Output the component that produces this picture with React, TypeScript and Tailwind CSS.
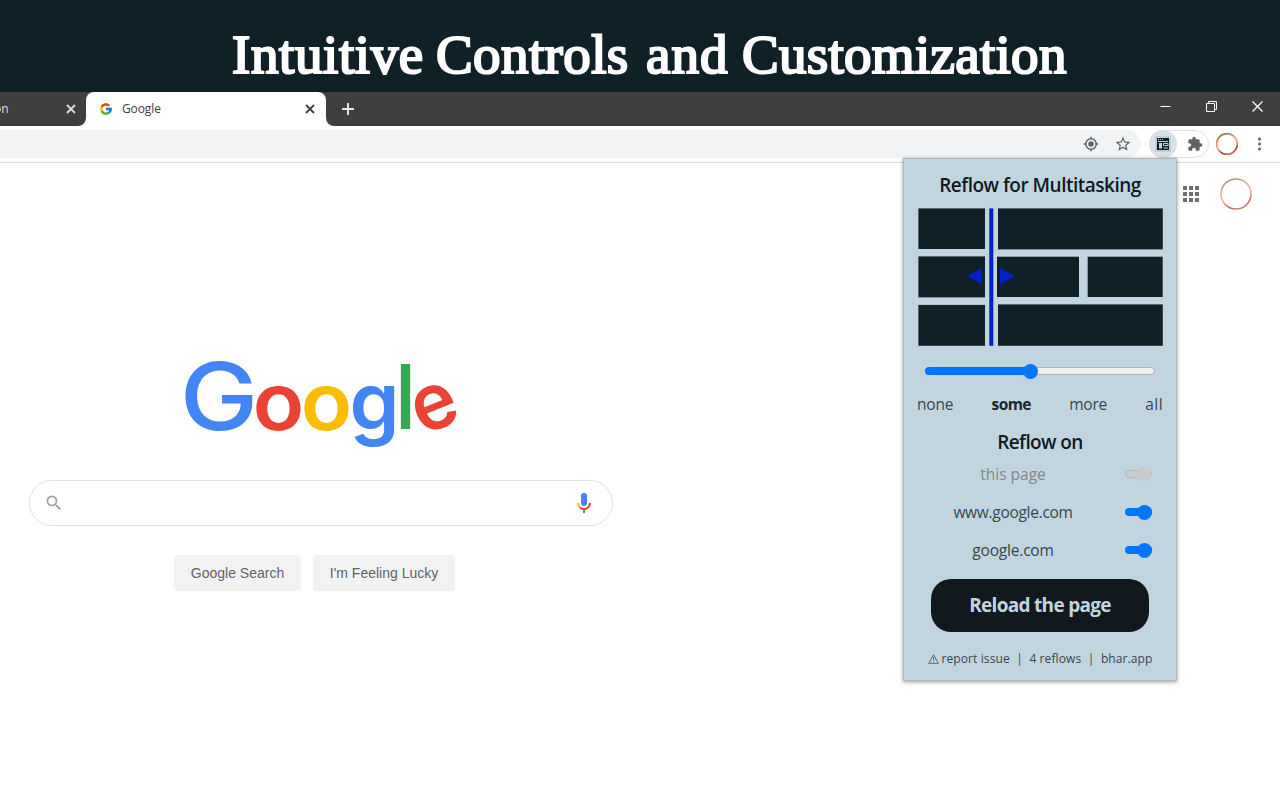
import React from "react";
import { FcGoogle } from "react-icons/fc";
import { MdSearch, MdStarBorder, MdExtension } from "react-icons/md";

const CloseIcon = ({ className }: { className: string }) => (
  <svg viewBox="0 0 10 10" className={className} fill="none" stroke="currentColor" strokeWidth="1.8">
    <path d="M1 1l8 8M9 1L1 9" />
  </svg>
);

const Ring = ({ id, className, stroke }: { id: string; className: string; stroke: number }) => (
  <svg viewBox="0 0 32 32" className={className} fill="none">
    <defs>
      <linearGradient id={id} x1="0.2" y1="0" x2="0.6" y2="1">
        <stop offset="0" stopColor="#8d6a4d" />
        <stop offset="0.15" stopColor="#a58a62" />
        <stop offset="0.35" stopColor="#e79a7c" />
        <stop offset="0.6" stopColor="#eda994" />
        <stop offset="0.85" stopColor="#b5402b" />
        <stop offset="1" stopColor="#b96d5b" />
      </linearGradient>
    </defs>
    <circle cx="16" cy="16" r="15" stroke={`url(#${id})`} strokeWidth={stroke} />
  </svg>
);

const Banner = () => (
  <header className="flex h-[92px] shrink-0 bg-[#102027] pl-[232px] pt-[17px]">
    <h1 className="flex gap-[17px] whitespace-nowrap font-['Liberation_Serif',serif] text-[55px] font-normal leading-[76px] text-white [-webkit-text-stroke:2.2px_white]">
      <span className="w-[187px] tracking-[0.6px]">Intuitive</span>
      <span className="w-[193px] tracking-[0.4px]">Controls</span>
      <span className="w-[79px] tracking-[1px]">and</span>
      <span className="tracking-[0.3px]">Customization</span>
    </h1>
  </header>
);

const TabStrip = () => (
  <div className="flex h-[34px] shrink-0 bg-white font-['Open_Sans',sans-serif] text-[12px]">
    <div className="flex w-[86px] items-center justify-between rounded-br-lg bg-[#3f3f3f] pr-[10px] text-[#dedede]">
      <span className="-ml-[6px]">on</span>
      <CloseIcon className="size-[10px]" />
    </div>
    <div className="w-[240px] bg-[#3f3f3f]">
      <div className="flex h-full items-center rounded-t-lg bg-white pl-[13px] pr-[11px] text-[#3c4043]">
        <FcGoogle className="size-[14px]" />
        <span className="ml-[9px] flex-1 tracking-[-0.1px]">Google</span>
        <CloseIcon className="size-[10px]" />
      </div>
    </div>
    <div className="flex flex-1 items-center rounded-bl-lg bg-[#3f3f3f] pl-[16px] text-white">
      <svg viewBox="0 0 12 12" className="size-[12px]" stroke="#e8e8e8" strokeWidth="1.9">
        <path d="M6 0v12M0 6h12" />
      </svg>
      <div className="ml-auto flex items-center gap-[35px] pb-[5px] pr-[17px]">
        <svg viewBox="0 0 11 11" className="size-[11px]" stroke="white" fill="none">
          <path d="M0.5 5.5h10" />
        </svg>
        <svg viewBox="0 0 11 11" className="size-[11px]" stroke="white" fill="none">
          <path d="M.5 2.5h8v8h-8zM2.5 2.5v-2h8v8h-2" />
        </svg>
        <svg viewBox="0 0 11 11" className="size-[11px]" stroke="white" strokeWidth="1.2" fill="none">
          <path d="M.5.5l10 10M10.5.5l-10 10" />
        </svg>
      </div>
    </div>
  </div>
);

const Toolbar = () => (
  <div className="flex h-[37px] shrink-0 items-start border-b border-[#dadcdd] bg-white pt-[4px]">
    <div className="flex h-[28px] w-[1141px] items-center justify-end gap-[15px] rounded-r-full bg-[#f1f3f4] pr-[9px] text-[#5f6368]">
      <svg viewBox="0 0 16 16" className="size-[16px]" fill="none" stroke="currentColor" strokeWidth="1.5">
        <circle cx="8" cy="8" r="5.2" />
        <circle cx="8" cy="8" r="2.7" fill="currentColor" stroke="none" />
        <path d="M8 .8v2M8 13.2v2M.8 8h2M13.2 8h2" />
      </svg>
      <MdStarBorder className="size-[18px]" />
    </div>
    <div className="ml-[8px] flex h-[28px] w-[60px] items-center rounded-full border border-[#dfe1e4]">
      <div className="-ml-px flex size-[28px] shrink-0 items-center justify-center rounded-full bg-[#dedfe0]">
        <svg viewBox="0 0 16 16" className="size-[16px]">
          <rect width="16" height="16" rx="1.5" fill="#b9d0db" />
          <rect x="2" y="2" width="12" height="12" fill="#0d1b22" />
          <path d="M3 3.5h1M5 3.500h1M7 3.500h1" stroke="#c1d5e0" />
          <path d="M3 5.500h10" stroke="#c1d5e0" />
          <path d="M4 7h3v5.500H4z" fill="#c1d5e0" />
          <path d="M8.500 7.500H13V9.500H8.500zM8.500 12H13" fill="none" stroke="#c1d5e0" />
        </svg>
      </div>
      <MdExtension className="ml-[10px] size-[16px] shrink-0 text-[#5f6368]" />
    </div>
    <Ring id="small" className="ml-[7px] mt-[3px] size-[22px]" stroke={2.6} />
    <svg viewBox="0 0 4 14" className="ml-[19px] mt-[7px] h-[14px] w-[4px]" fill="#5f6368">
      <circle cx="2.500" cy="2" r="1.5" />
      <circle cx="2.500" cy="7" r="1.5" />
      <circle cx="2.500" cy="12" r="1.5" />
    </svg>
  </div>
);

const Wordmark = () => (
  <svg viewBox="0 0 280 100" className="h-[100px] w-[280px] overflow-visible font-['Inter',sans-serif]" textAnchor="middle" role="img" aria-label="Google">
    <text fill="#4285f4" fontSize="93" fontWeight="500" transform="translate(39 74.500) scale(1.13 1)">G</text>
    <text fill="#ea4335" fontSize="79" fontWeight="600" transform="translate(98.500 74.500) scale(1.07 1)">o</text>
    <text fill="#fbbc05" fontSize="79" fontWeight="600" transform="translate(146.500 74.500) scale(1.07 1)">o</text>
    <text fill="#4285f4" fontSize="80" fontWeight="600" transform="translate(194.500 75)">g</text>
    <text fill="#34a853" fontSize="89" fontWeight="600" transform="translate(225.500 74) scale(.82 1)">l</text>
    <text fill="#ea4335" fontSize="79" fontWeight="600" transform="translate(254.500 52) rotate(-22) scale(.96 1)" y="22">e</text>
  </svg>
);

const SearchPage = () => (
  <main className="flex flex-1 bg-white">
    <div className="flex w-[642px] flex-col pl-[29px]">
      <div className="ml-[151px] mt-[192px] h-[100px]">
        <Wordmark />
      </div>
      <div className="mt-[25px] flex h-[46px] w-[584px] items-center justify-between rounded-full border border-[#dfe1e5] pl-[14px] pr-[20px]">
        <MdSearch className="size-[20px] text-[#9aa0a6]" />
        <svg viewBox="0 0 16 24" className="h-[24px] w-[16px]" fill="none" strokeWidth="2">
          <rect x="5" y="2" width="6" height="13" rx="3" fill="#4285f4" />
          <path d="M2 12a6 6 0 0 0 2 4.500" stroke="#fbbc05" />
          <path d="M4 16.500a6 6 0 0 0 10-4.500" stroke="#ea4335" />
          <path d="M8 18.500v3.500" stroke="#34a853" />
        </svg>
      </div>
      <div className="ml-[145px] mt-[29px] flex gap-[12px] font-['Liberation_Sans',Arial,sans-serif] text-[14px] text-[#5f6368]">
        <button className="h-[36px] w-[127px] rounded bg-[#f2f2f2]">Google Search</button>
        <button className="h-[36px] w-[142px] rounded bg-[#f2f2f2]">I'm Feeling Lucky</button>
      </div>
    </div>
    <div className="ml-auto flex items-center gap-[21px] self-start pr-[28px] pt-[15px]">
      <svg viewBox="0 0 16 16" className="size-[16px]" fill="#6f6f6f">
        <path d="M0 0h4v4H0zM6 0h4v4H6zM12 0h4v4h-4zM0 6h4v4H0zM6 6h4v4H6zM12 6h4v4h-4zM0 12h4v4H0zM6 12h4v4H6zM12 12h4v4h-4z" />
      </svg>
      <Ring id="large" className="size-[32px] opacity-80" stroke={1.5} />
    </div>
  </main>
);

const LayoutDiagram = () => (
  <svg viewBox="0 0 245 138" className="mt-[9px] h-[138px] w-[245px]">
    <g fill="#102027">
      <rect x=".4" y=".4" width="66.600" height="40.600" />
      <rect x="80" y=".4" width="164.800" height="41" />
      <rect x=".4" y="48.400" width="66.600" height="41" />
      <rect x="79" y="48.700" width="82" height="40.300" />
      <rect x="169.700" y="48.700" width="75" height="40.300" />
      <rect x=".4" y="96.900" width="66.600" height="40.900" />
      <rect x="80" y="96.400" width="164.800" height="41.400" />
    </g>
    <g fill="#0020c8">
      <rect x="71.300" y=".4" width="4" height="137.400" />
      <path d="M49.200 68L63.700 59.700V76.600zM96.700 68L82 59.700V76.600z" />
    </g>
  </svg>
);

const Toggle = ({ disabled = false }: { disabled?: boolean }) =>
  disabled ? (
    <div className="flex h-[8px] w-[27px] items-center justify-end rounded-full border border-[#b4b8ba] bg-[#c9ced1]">
      <div className="size-[15px] shrink-0 rounded-full bg-[#cbcbcb]" />
    </div>
  ) : (
    <div className="flex h-[8px] w-[27px] items-center justify-end rounded-full bg-[#0075ff]">
      <div className="mr-[0.5px] size-[15px] shrink-0 rounded-full bg-[#0075ff]" />
    </div>
  );

const SiteRow = ({ label, className, disabled }: { label: string; className: string; disabled?: boolean }) => (
  <div className="flex h-[38px] w-full items-center pl-[8px]">
    <span className="w-[202px] pt-[2px] text-center">
      <span className={className}>{label}</span>
    </span>
    <div className="ml-[11px]">
      <Toggle disabled={disabled} />
    </div>
  </div>
);

const ReflowPopup = () => (
  <section className="absolute left-[903px] top-[158px] flex h-[523px] w-[274px] flex-col items-center border border-[#aeb8be] bg-[#c1d5e0] font-['Open_Sans','Noto_Sans',sans-serif] text-[15.500px] text-[#36474f] shadow-[0_1px_4px_rgba(0,0,0,0.4)]">
    <h2 className="mt-[12px] h-[28px] whitespace-nowrap text-[19px] font-semibold leading-[28px] tracking-[-0.5px] text-[#11191f]">Reflow for Multitasking</h2>
    <LayoutDiagram />
    <div className="mt-[21px] flex h-[8px] w-[230px] shrink-0 items-center rounded-full border border-[#b2b2b2] bg-[#efefef]">
      <div className="-ml-px h-[8px] w-[105px] shrink-0 rounded-l-full bg-[#0075ff]" />
      <div className="-ml-[7.500px] size-[15px] shrink-0 rounded-full bg-[#0075ff]" />
    </div>
    <div className="mt-[17px] flex h-[24px] w-[246px] items-center justify-between leading-[24px] tracking-[-0.2px]">
      <span>none</span>
      <span className="font-bold tracking-[-0.6px] text-[#1b262d]">some</span>
      <span>more</span>
      <span className="tracking-[0.4px]">all</span>
    </div>
    <h2 className="mt-[12px] h-[27px] whitespace-nowrap text-[19px] font-semibold leading-[28px] tracking-[-0.6px] text-[#11191f]">Reflow on</h2>
    <SiteRow label="this page" className="tracking-[0px] text-[#838789]" disabled />
    <SiteRow label="www.google.com" className="tracking-[-0.300px]" />
    <SiteRow label="google.com" className="tracking-[-0.200px]" />
    <button className="mt-[10px] h-[53px] w-[218px] shrink-0 rounded-[20px] bg-[#11191f] text-[19px] font-bold tracking-[-0.7px] text-[#c1d5e0]">Reload the page</button>
    <footer className="mt-[17px] flex h-[20px] w-[225px] items-center justify-between whitespace-nowrap text-[12px] tracking-[0.1px]">
      <span className="flex items-center gap-[3px]">
        <svg viewBox="0 0 12 11" className="h-[10px] w-[11px]" fill="none" stroke="currentColor" strokeWidth=".8">
          <path d="M6 .8L11.300 10.300H.7zM6 3.500v3.500M6 8.200v1" />
        </svg>
        report issue
      </span>
      <span>|</span>
      <span>4 reflows</span>
      <span>|</span>
      <span>bhar.app</span>
    </footer>
  </section>
);

export default function App() {
  return (
    <div className="relative flex h-[800px] w-[1280px] flex-col overflow-hidden bg-white">
      <Banner />
      <TabStrip />
      <Toolbar />
      <SearchPage />
      <ReflowPopup />
    </div>
  );
}
